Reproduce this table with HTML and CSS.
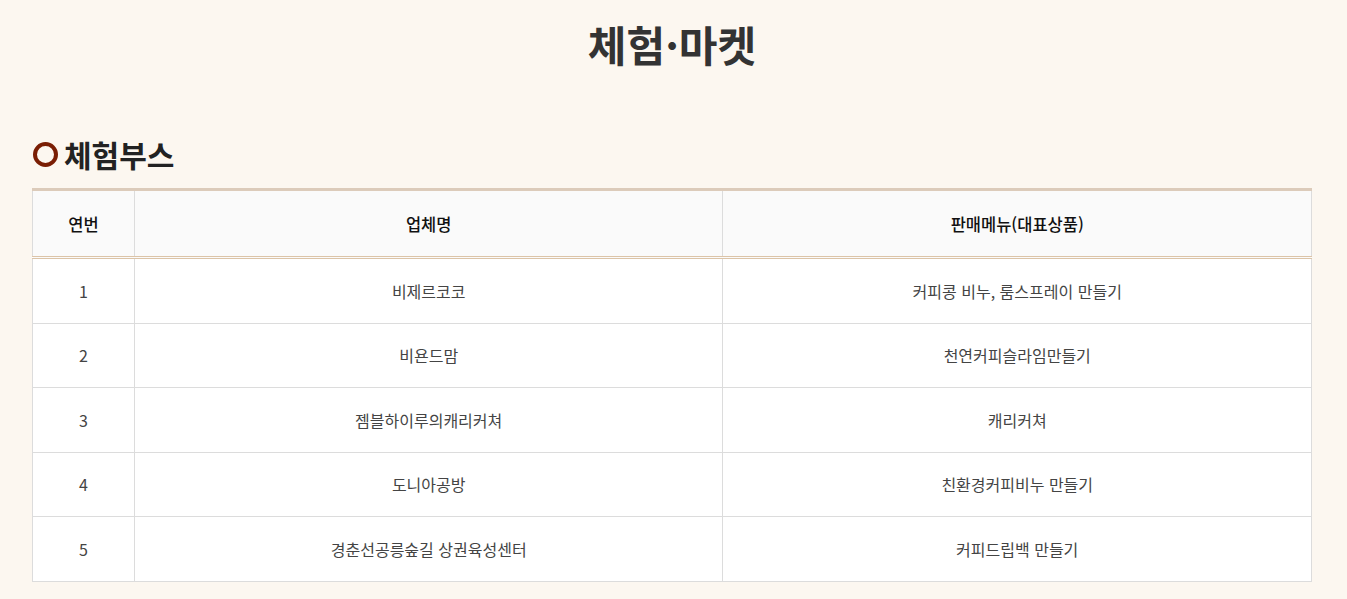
FILE: index.html
```html
<!DOCTYPE html>
<html lang="ko">
<head>
<meta charset="utf-8">
<link rel="stylesheet" href="styles.css">
</head>
<body>
<div class="page">
  <h1 class="title">체험·마켓</h1>
  <h2 class="sec-title"><span class="ring"></span>체험부스</h2>
  <table class="tbl">
    <colgroup><col class="c1"><col class="c2"><col class="c3"></colgroup>
    <thead>
      <tr><th>연번</th><th>업체명</th><th>판매메뉴(대표상품)</th></tr>
    </thead>
    <tbody>
      <tr><td>1</td><td>비제르코코</td><td>커피콩 비누, 룸스프레이 만들기</td></tr>
      <tr><td>2</td><td>비욘드맘</td><td>천연커피슬라임만들기</td></tr>
      <tr><td>3</td><td>젬블하이루의캐리커쳐</td><td>캐리커쳐</td></tr>
      <tr><td>4</td><td>도니아공방</td><td>친환경커피비누 만들기</td></tr>
      <tr><td>5</td><td>경춘선공릉숲길 상권육성센터</td><td>커피드립백 만들기</td></tr>
    </tbody>
  </table>
</div>
</body>
</html>
```
FILE: styles.css
```css
html, body { margin: 0; padding: 0; }
body {
  background: #fcf7f0;
  font-family: "Noto Sans CJK KR", "Noto Sans", sans-serif;
  color: #333;
}
.page { padding: 16px 35px 0 32px; }
.title {
  margin: 0;
  text-align: center;
  font-size: 42px;
  font-weight: 700;
  line-height: 56px;
  color: #333;
  letter-spacing: 0;
}
.sec-title {
  margin: 62px 0 0 0;
  display: flex;
  align-items: center;
  font-size: 30px;
  font-weight: 700;
  color: #222;
  line-height: 40px;
  letter-spacing: 0;
}
.ring {
  width: 17px;
  height: 17px;
  border: 4px solid #7a1e04;
  border-radius: 50%;
  margin: 0 6px 0 1px;
  flex: none;
}
.tbl {
  margin-top: 14px;
  width: 1280px;
  border-collapse: collapse;
  border-top: 3px solid #dccbba;
  background: #fff;
}
.c1 { width: 102px; }
.c2 { width: 589px; }
.c3 { width: 589px; }
.tbl th {
  height: 65px;
  padding: 0;
  background: #fafafa;
  font-size: 16.5px;
  font-weight: 500;
  color: #111;
  border: 1px solid #dcdcdc;
  border-top: none;
  border-bottom: 3px double #dcc4a8;
}
.tbl td {
  height: 63.5px;
  padding: 0;
  text-align: center;
  font-size: 16px;
  color: #444;
  border: 1px solid #dcdcdc;
}
```
